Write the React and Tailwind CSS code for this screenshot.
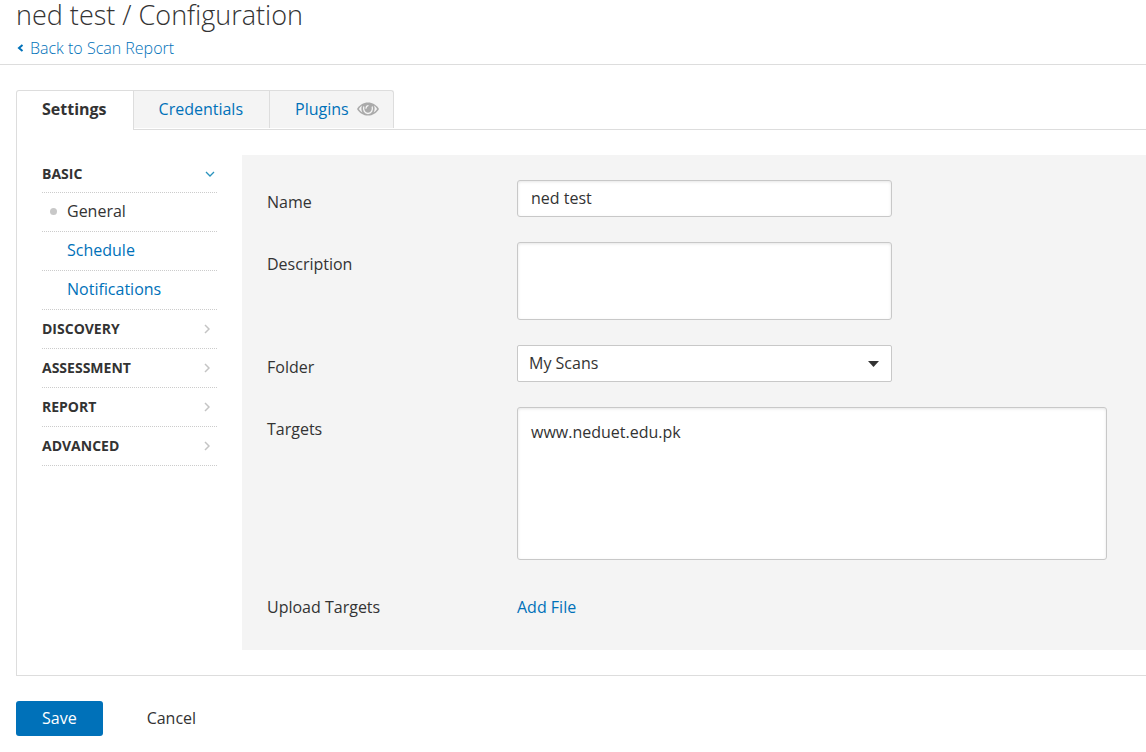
import { useState } from "react";
import { clsx } from "clsx";

const TABS = ["Settings", "Credentials", "Plugins"];

const BASIC_PAGES = ["General", "Schedule", "Notifications"];

const SECTIONS = ["Discovery", "Assessment", "Report", "Advanced"];

const FIELD =
  "block w-full rounded-[3px] border border-[#c8c8c8] bg-white px-[13px] shadow-[inset_0_1px_3px_rgba(0,0,0,0.1)] outline-none focus:border-[#0071b9]";

function EyeIcon() {
  return (
    <svg width="22" height="14" viewBox="0 0 22 14" aria-hidden="true">
      <path d="M0 7C2.500 2.800 6.400.4 11 .4S19.500 2.800 22 7c-2.500 4.200-6.400 6.600-11 6.600S2.500 11.200 0 7Z" fill="#aaa" />
      <path
        d="M5 3.600C3.700 4.500 2.700 5.600 1.900 7c.9 1.500 2.100 2.700 3.500 3.500C4.200 8.500 4 6 5 3.600ZM17 3.600c1.300.9 2.300 2 3.100 3.400-.9 1.500-2.100 2.700-3.500 3.500 1.200-2 1.400-4.500.4-6.900Z"
        fill="#f4f4f4"
      />
      <path
        d="M6.800 4.500c-.9 3.800 1 7 4.200 7s5.100-3.200 4.200-7"
        fill="none"
        stroke="#f4f4f4"
        strokeWidth="1.300"
      />
      <path
        d="M9 6.200c0-1.300.7-2.300 2-2.600"
        fill="none"
        stroke="#f4f4f4"
        strokeWidth="1.300"
        strokeLinecap="round"
      />
    </svg>
  );
}

function Chevron({ open }) {
  return open ? (
    <svg width="10" height="6" viewBox="0 0 10 6" className="mr-0.5" aria-hidden="true">
      <path d="M1 1l4 4 4-4" fill="none" stroke="#2a93bd" strokeWidth="1.300" />
    </svg>
  ) : (
    <svg width="6" height="10" viewBox="0 0 6 10" className="mr-[7px]" aria-hidden="true">
      <path d="M1 1l4 4-4 4" fill="none" stroke="#c4c4c4" strokeWidth="1.500" />
    </svg>
  );
}

function SectionButton({ label, open }) {
  return (
    <button
      type="button"
      aria-expanded={open}
      className={clsx(
        "flex w-full items-center justify-between text-sm font-bold uppercase",
        open ? "h-[37px]" : "h-[38px]"
      )}
    >
      {label}
      <Chevron open={open} />
    </button>
  );
}

function Row({ label, htmlFor, wide, children }) {
  return (
    <div className="flex">
      <label htmlFor={htmlFor} className="w-[250px] shrink-0 pt-2.5">
        {label}
      </label>
      <div className={clsx("min-w-0 flex-1", wide ? "max-w-[590px]" : "max-w-[375px]")}>
        {children}
      </div>
    </div>
  );
}

function Header() {
  return (
    <header className="border-b border-[#ddd] pb-1 pl-4">
      <h1 className="text-[27px] leading-[30px] font-light">ned test / Configuration</h1>
      <a
        href="#report"
        className="mt-1.5 inline-flex items-center gap-1.5 leading-6 font-light text-[#0071b9]"
      >
        <svg width="8" height="8" viewBox="0 0 8 8" aria-hidden="true">
          <path d="M6.500 1L3 4l3.500 3" fill="none" stroke="#0071b9" strokeWidth="2" />
        </svg>
        Back to Scan Report
      </a>
    </header>
  );
}

function Tabs({ tab, setTab }) {
  return (
    <div role="tablist" className="-mb-px flex items-start">
      {TABS.map((name, i) => (
        <button
          key={name}
          type="button"
          role="tab"
          aria-selected={tab === name}
          onClick={() => setTab(name)}
          className={clsx(
            "flex items-center gap-2 border-t border-r border-[#ddd] pl-[25px]",
            i === 0 && "rounded-tl-[3px] border-l",
            i === TABS.length - 1 ? "rounded-tr-[3px] pr-3.5" : "pr-[26px]",
            tab === name
              ? "h-10 bg-white pb-1 font-bold"
              : "h-[38px] bg-[#f4f4f4] pb-0.5 text-[#0071b9]"
          )}
        >
          {name}
          {name === "Plugins" && <EyeIcon />}
        </button>
      ))}
    </div>
  );
}

function SideNav() {
  return (
    <nav className="w-[175px] shrink-0">
      <ul>
        <li className="border-b border-dotted border-[#ccc]">
          <SectionButton label="Basic" open />
        </li>
        {BASIC_PAGES.map((page) => (
          <li key={page} className="border-b border-dotted border-[#ccc]">
            <a
              href={`#${page.toLowerCase()}`}
              className={clsx(
                "flex h-[38px] items-center pb-0.5",
                page === "General" ? "pl-2" : "pl-[25px] text-[#0071b9]"
              )}
            >
              {page === "General" && (
                <span className="mr-2.5 size-[7px] rounded-full bg-[#c8c8c8]" />
              )}
              {page}
            </a>
          </li>
        ))}
        {SECTIONS.map((section) => (
          <li key={section} className="border-b border-dotted border-[#ccc]">
            <SectionButton label={section} open={false} />
          </li>
        ))}
      </ul>
    </nav>
  );
}

function SettingsForm() {
  return (
    <div className="flex min-w-0 flex-1 flex-col gap-[25px] bg-[#f4f4f4] p-[25px]">
      <Row label="Name" htmlFor="name">
        <input
          id="name"
          type="text"
          defaultValue="ned test"
          className={clsx(FIELD, "h-[37px] pb-0.5")}
        />
      </Row>
      <Row label="Description" htmlFor="description">
        <textarea id="description" className={clsx(FIELD, "h-[78px] resize-none py-3")} />
      </Row>
      <Row label="Folder" htmlFor="folder">
        <div className="relative">
          <select
            id="folder"
            className="block h-[37px] w-full appearance-none rounded-[2px] border border-[#c8c8c8] bg-white px-[11px] pb-0.5 outline-none"
          >
            <option>My Scans</option>
            <option>Trash</option>
          </select>
          <svg
            width="11"
            height="6"
            viewBox="0 0 11 6"
            className="pointer-events-none absolute top-4 right-[13px]"
            aria-hidden="true"
          >
            <path d="M0 0h11L5.500 6z" fill="#333" />
          </svg>
        </div>
      </Row>
      <Row label="Targets" htmlFor="targets" wide>
        <textarea
          id="targets"
          defaultValue="www.neduet.edu.pk"
          className={clsx(FIELD, "h-[153px] resize-none py-3")}
        />
      </Row>
      <Row label="Upload Targets" htmlFor="upload">
        <button id="upload" type="button" className="pt-2.5 pb-1.5 text-[#0071b9]">
          Add File
        </button>
      </Row>
    </div>
  );
}

export default function App() {
  const [tab, setTab] = useState("Settings");

  return (
    <div className="min-h-screen bg-white pb-4 font-['Open_Sans',sans-serif] text-base text-[#333]">
      <Header />
      <main className="pt-[25px] pl-4">
        <Tabs tab={tab} setTab={setTab} />
        <section className="flex gap-[25px] border-y border-l border-[#ddd] py-[25px] pl-[25px]">
          <SideNav />
          <SettingsForm />
        </section>
        <div className="mt-[25px] flex items-center gap-[44px]">
          <button
            type="button"
            className="h-[35px] rounded-[3px] bg-[#0071b9] px-[26px] pb-0.5 font-medium text-white"
          >
            Save
          </button>
          <button type="button" className="pb-0.5">
            Cancel
          </button>
        </div>
      </main>
    </div>
  );
}
